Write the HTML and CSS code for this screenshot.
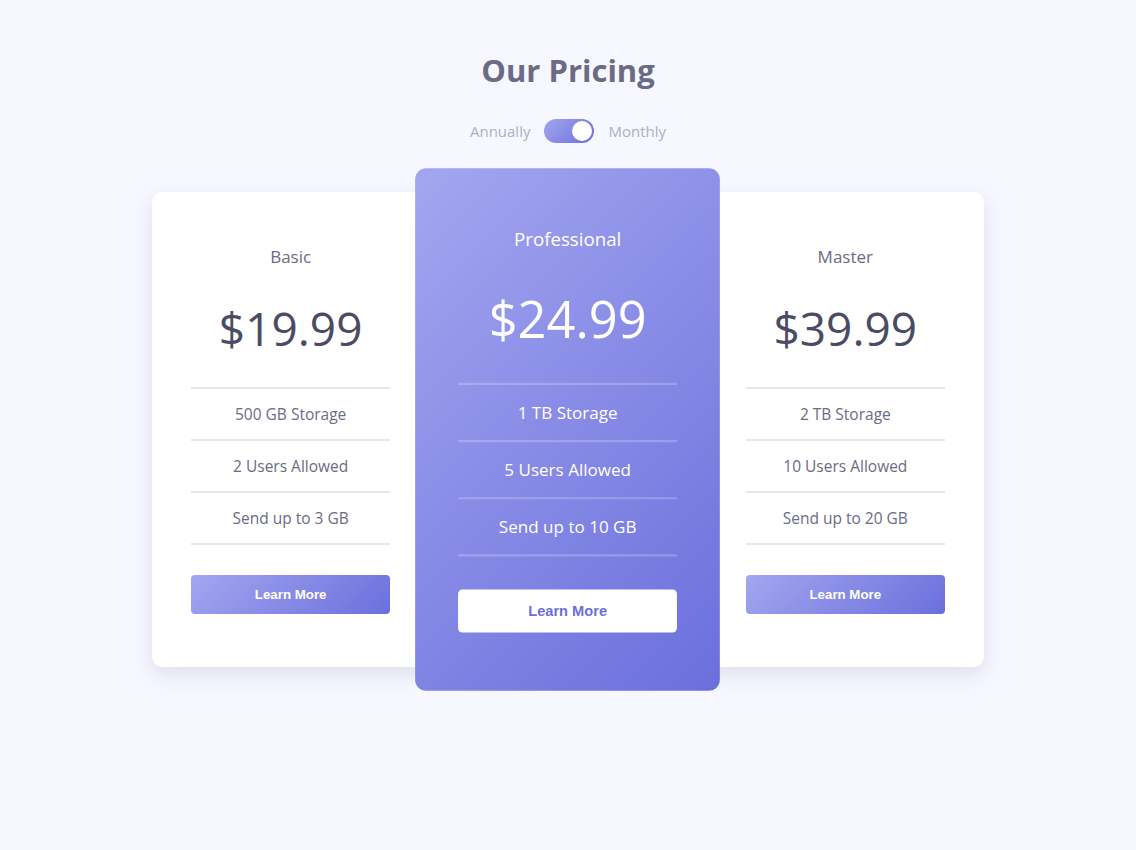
FILE: index.html
```html
<!DOCTYPE html>
<html lang="en">
<head>
    <meta charset="UTF-8">
    <meta name="viewport" content="width=device-width, initial-scale=1.0">
    <title>Our Pricing</title>
    <link rel="stylesheet" href="styles.css">
</head>
<body>
    <header id="pricing-header">
        <h1>Our Pricing</h1>
        <div id="period-toggle">
            <span class="period-label">Annually</span>
            <label class="switch">
                <input type="checkbox" checked>
                <span class="slider"></span>
            </label>
            <span class="period-label">Monthly</span>
        </div>
    </header>

    <main id="cards">
        <div class="card">
            <h2 class="plan-name">Basic</h2>
            <div class="plan-price">$19.99</div>
            <ul class="features">
                <li>500 GB Storage</li>
                <li>2 Users Allowed</li>
                <li>Send up to 3 GB</li>
            </ul>
            <button class="learn-button">Learn More</button>
        </div>

        <div class="card active">
            <h2 class="plan-name">Professional</h2>
            <div class="plan-price">$24.99</div>
            <ul class="features">
                <li>1 TB Storage</li>
                <li>5 Users Allowed</li>
                <li>Send up to 10 GB</li>
            </ul>
            <button class="learn-button">Learn More</button>
        </div>

        <div class="card">
            <h2 class="plan-name">Master</h2>
            <div class="plan-price">$39.99</div>
            <ul class="features">
                <li>2 TB Storage</li>
                <li>10 Users Allowed</li>
                <li>Send up to 20 GB</li>
            </ul>
            <button class="learn-button">Learn More</button>
        </div>
    </main>
</body>
</html>
```

FILE: styles.css
```css
body {
    font-family: "Open Sans", "Noto Sans", sans-serif;
    margin: 0;
    padding: 0;
    min-height: 100vh;
    background-color: #f6f7ff;
    color: #6b6b85;
}

#pricing-header {
    display: flex;
    flex-direction: column;
    align-items: center;
    padding-top: 49px;
}

#pricing-header h1 {
    margin: 0;
    font-size: 31px;
    line-height: 42px;
    font-weight: 700;
    color: #6b6b85;
}

#period-toggle {
    display: flex;
    align-items: center;
    gap: 14px;
    margin-top: 28px;
}

.period-label {
    font-size: 15px;
    color: #afafc6;
}

.switch {
    position: relative;
    display: inline-block;
    width: 50px;
    height: 24px;
}

.switch input {
    opacity: 0;
    width: 0;
    height: 0;
}

.slider {
    position: absolute;
    inset: 0;
    border-radius: 12px;
    background: linear-gradient(135deg, #a3a6ef, #6b6fdc);
    cursor: pointer;
}

.slider::before {
    content: "";
    position: absolute;
    top: 2px;
    left: 2px;
    width: 20px;
    height: 20px;
    border-radius: 50%;
    background-color: #fff;
    transition: transform 0.3s;
}

.switch input:checked + .slider::before {
    transform: translateX(26px);
}

#cards {
    display: flex;
    width: 832px;
    margin: 49px auto 0;
    padding-bottom: 80px;
}

.card {
    flex: 1;
    background-color: #fff;
    border-radius: 10px;
    padding: 53px 39px;
    box-shadow: 0 8px 20px rgba(120, 120, 160, 0.18);
    text-align: center;
}

.card.active {
    background: linear-gradient(135deg, #a3a6ef, #6b6fdc);
    color: #fff;
    transform: scale(1.1);
    position: relative;
    z-index: 1;
    box-shadow: none;
}

.plan-name {
    margin: 0;
    font-size: 17px;
    line-height: 24px;
    font-weight: 400;
}

.plan-price {
    margin-top: 30px;
    font-size: 46px;
    line-height: 58px;
    color: #4b4b63;
}

.active .plan-price {
    color: #fff;
}

.features {
    list-style: none;
    margin: 30px 0 0;
    padding: 0;
    border-top: 2px solid #e6e6ee;
}

.features li {
    height: 50px;
    line-height: 50px;
    font-size: 15.5px;
    border-bottom: 2px solid #e6e6ee;
}

.active .features {
    border-top-color: rgba(255, 255, 255, 0.22);
}

.active .features li {
    border-bottom-color: rgba(255, 255, 255, 0.22);
}

.learn-button {
    display: block;
    width: 100%;
    height: 39px;
    margin-top: 30px;
    border: none;
    border-radius: 4px;
    background: linear-gradient(135deg, #a3a6ef, #6b6fdc);
    color: #fff;
    font-family: "Liberation Sans", Arial, sans-serif;
    font-size: 13.3px;
    font-weight: 700;
    cursor: pointer;
}

.active .learn-button {
    background: #fff;
    color: #6b6fdc;
}
```
